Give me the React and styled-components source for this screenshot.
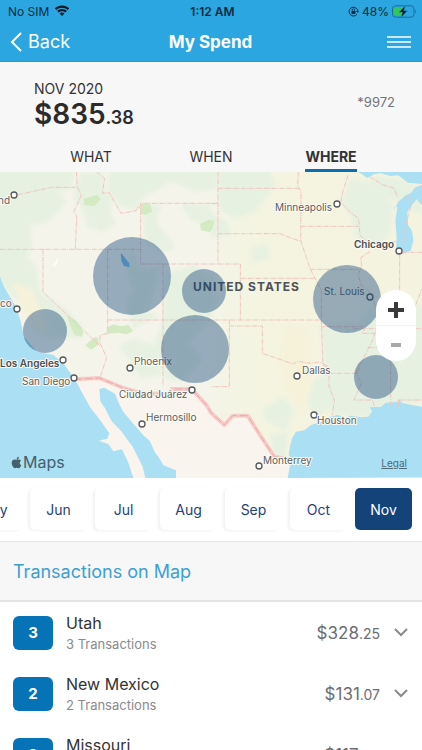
import React, { useState } from "react";
import styled, { createGlobalStyle } from "styled-components";
import { FaApple } from "react-icons/fa";

const GlobalStyle = createGlobalStyle`
  * {
    box-sizing: border-box;
  }
  body {
    margin: 0;
    font-family: Inter, "Liberation Sans", sans-serif;
    color: #333;
    background-color: white;
  }
  button {
    font: inherit;
    color: inherit;
    border: none;
    background: none;
    padding: 0;
    cursor: pointer;
  }
`;

const Screen = styled.div`
  display: flex;
  flex-direction: column;
  height: 100vh;
  overflow: hidden;
`;

const TopBar = styled.header`
  flex: none;
  background-color: #2ba6e1;
  border-bottom: 1px solid #2a98d3;
`;

const ThreeColumns = styled.div`
  display: grid;
  grid-template-columns: 1fr auto 1fr;
  align-items: center;
`;

const StatusBar = styled(ThreeColumns)`
  height: 22px;
  padding: 0 5px 0 8px;
  font-size: 12px;
  font-weight: 400;
  color: #0d2c3d;
`;

const StatusGroup = styled.div`
  display: flex;
  align-items: center;
  gap: ${({ $end }) => ($end ? "3px" : "5px")};
  justify-content: ${({ $end }) => ($end ? "flex-end" : "flex-start")};
`;

const Clock = styled.div`
  font-weight: 600;
`;

const NavBar = styled(ThreeColumns)`
  height: 39px;
  padding: 0 11px 0 10px;
  color: white;
`;

const BackButton = styled.button`
  display: flex;
  align-items: center;
  gap: 6px;
  font-size: 18px;
  line-height: 22px;
`;

const Title = styled.h1`
  margin: 0;
  font-size: 17px;
  font-weight: 700;
`;

const MenuButton = styled.button`
  justify-self: end;
  display: flex;
`;

const Summary = styled.section`
  flex: none;
  background-color: #f7f7f7;
`;

const SummaryRow = styled.div`
  display: flex;
  align-items: center;
  justify-content: space-between;
  padding: 18px 27px 10px 34px;
`;

const Period = styled.div`
  font-size: 14px;
  line-height: 18px;
`;

const Total = styled.div`
  font-size: 28px;
  line-height: 32px;
  font-weight: 600;
  color: #2b2b2b;
`;

const TotalCents = styled.span`
  font-size: 18px;
`;

const CardNumber = styled.div`
  margin-bottom: 10px;
  font-size: 13px;
  line-height: 18px;
  color: #737378;
`;

const Tabs = styled.nav`
  display: grid;
  grid-template-columns: repeat(3, 1fr);
  justify-items: center;
  padding: 0 31px;
`;

const Tab = styled.button`
  height: 28px;
  font-size: 14px;
  font-weight: ${({ $active }) => ($active ? 700 : 400)};
  border-bottom: 3px solid ${({ $active }) => ($active ? "#0b6fae" : "transparent")};
`;

const MapArea = styled.section`
  position: relative;
  flex: none;
`;

const MapDrawing = styled.svg`
  display: block;
  width: 100%;
  height: auto;
`;

const CityName = styled.text`
  font-size: 10px;
  font-weight: ${({ $major }) => ($major ? 600 : 400)};
  fill: ${({ $major }) => ($major ? "#4a4d50" : "#5c5f62")};
  stroke: #fbf9f2;
  stroke-width: ${({ $plain }) => ($plain ? "0" : "2px")};
  stroke-linejoin: round;
  paint-order: stroke;
`;

const CountryName = styled.text`
  font-size: 12px;
  font-weight: 700;
  letter-spacing: 1px;
  fill: #4d5257;
`;

const MapBrand = styled.div`
  position: absolute;
  left: 10px;
  bottom: 6px;
  display: flex;
  align-items: center;
  font-size: 16px;
  line-height: 20px;
  color: #45606d;
`;

const LegalLink = styled.a`
  position: absolute;
  right: 15px;
  bottom: 8px;
  font-size: 10px;
  line-height: 14px;
  color: #4d6a78;
`;

const ZoomControl = styled.div`
  position: absolute;
  right: 6px;
  bottom: 117px;
  width: 40px;
  border-radius: 20px;
  background-color: white;
`;

const ZoomButton = styled.button`
  display: flex;
  align-items: center;
  justify-content: center;
  width: 100%;
  height: 35px;
  padding-top: 4px;
  color: ${({ $faded }) => ($faded ? "#a9a9ab" : "#3b3b3d")};
  & + & {
    height: 36px;
    padding-top: 2px;
    border-top: 1px solid #f2f2f2;
  }
`;

const Months = styled.nav`
  flex: none;
  display: flex;
  justify-content: flex-end;
  gap: 8px;
  padding: 10px 10px 11px;
  overflow: hidden;
`;

const Month = styled.button`
  flex: none;
  width: 57px;
  height: 42px;
  border-radius: 5px;
  font-size: 14px;
  color: ${({ $active }) => ($active ? "white" : "#1f4278")};
  background-color: ${({ $active }) => ($active ? "#14437a" : "white")};
  box-shadow: ${({ $active }) => ($active ? "none" : "-2px 1px 3px rgba(0, 0, 0, 0.06)")};
`;

const ListHeading = styled.h2`
  flex: none;
  margin: 0;
  padding: 19px 13px 17px;
  border-top: 1px solid #e6e6e6;
  border-bottom: 2px solid #e4e4e4;
  background-color: #f7f7f7;
  font-size: 18px;
  line-height: 22px;
  font-weight: 400;
  color: #3ba0d3;
`;

const StateList = styled.ul`
  flex: 1;
  min-height: 0;
  margin: 0;
  padding: 0;
  list-style: none;
  overflow: hidden;
`;

const StateRow = styled.li`
  display: flex;
  align-items: center;
  height: 61px;
  padding: 0 14px 0 13px;
`;

const Count = styled.div`
  display: flex;
  align-items: center;
  justify-content: center;
  width: 40px;
  height: 34px;
  margin-right: 13px;
  border-radius: 6px;
  background-color: #0573b5;
  color: white;
  font-size: 15px;
  font-weight: 700;
`;

const StateText = styled.div`
  flex: 1;
`;

const StateName = styled.div`
  font-size: 16px;
  line-height: 22px;
`;

const StateNote = styled.div`
  font-size: 13px;
  line-height: 20px;
  color: #8a8a8e;
`;

const Amount = styled.div`
  font-size: 17px;
  color: #6d6d72;
`;

const AmountCents = styled.span`
  font-size: 14px;
`;

const ExpandButton = styled.button`
  display: flex;
  margin-left: 14px;
  color: #8a8a8e;
`;

const WifiIcon = () => (
  <svg width="16" height="12" viewBox="0 0 16 12" fill="#0a1820" aria-hidden="true">
    <path d="M8 .5C5.200.5 2.700 1.600.8 3.300l1.600 1.700C3.900 3.600 5.800 2.800 8 2.800s4.100.8 5.600 2.200l1.600-1.700C13.300 1.600 10.800.5 8 .5z" />
    <path d="M8 4c-1.900 0-3.500.7-4.800 1.900l1.600 1.700C5.700 6.800 6.800 6.300 8 6.300s2.300.5 3.200 1.300l1.600-1.700C11.500 4.700 9.900 4 8 4z" />
    <path d="M8 7.500c-1 0-1.800.4-2.400 1L8 11l2.400-2.500c-.6-.6-1.400-1-2.400-1z" />
  </svg>
);

const RotationLockIcon = () => (
  <svg width="11" height="11" viewBox="0 0 11 11" aria-hidden="true">
    <path d="M9 8.300A4.400 4.400 0 1 1 9.900 5.500" fill="none" stroke="#0d2c3d" strokeWidth="1" />
    <path d="M8.300 5h2.700L9.700 7z" fill="#0d2c3d" />
    <rect x="3.500" y="5" width="4" height="3" rx=".4" fill="#0d2c3d" />
    <path d="M4.300 5V4a1.200 1.200 0 0 1 2.400 0v1" fill="none" stroke="#0d2c3d" strokeWidth=".8" />
  </svg>
);

const BatteryIcon = () => (
  <svg width="25" height="13" viewBox="0 0 25 13" aria-hidden="true">
    <rect x=".5" y=".8" width="21.500" height="11.400" rx="3" fill="none" stroke="#1b7096" />
    <path d="M4 2.300h7.500v8.400H4a2 2 0 0 1-2-2V4.300a2 2 0 0 1 2-2z" fill="#33c659" />
    <path d="M23.300 4.700c1.200.5 1.200 3.100 0 3.600z" fill="#1b7096" />
    <path d="M13.500.5L6.800 7.200h3.700L9 12.500l6.500-6.800h-3.700z" fill="#0a1820" stroke="#2ba6e1" strokeWidth=".4" />
  </svg>
);

// Terrain, water and state lines of the south-western map tile
const Terrain = () => (
  <svg width="422" height="306" viewBox="0 0 1266 918" preserveAspectRatio="none">
    <defs>
      <linearGradient id="land" x1="0" x2="1" y1="0" y2="0">
        <stop offset="0" stopColor="#f4f4ea" />
        <stop offset=".48" stopColor="#f5f4eb" />
        <stop offset=".58" stopColor="#f3f4e1" />
        <stop offset="1" stopColor="#f3f3e0" />
      </linearGradient>
      <filter id="soft">
        <feGaussianBlur stdDeviation="7" />
      </filter>
    </defs>
    <rect width="1266" height="918" fill="url(#land)" />

    <g fill="#e7f1e1" filter="url(#soft)">
      <path d="M-20-20h245l-8 70-45 10 30 30-60 60-50 10 5 60-30 70 40 80-8 60-40-40-79-70z" />
      <path d="M240 0h70v55l28 12-8 60 20 25-40 30-50-20-10-50-30-30z" />
      <path d="M330-20h320v70l-60 10-80-30-30 20-50 25-20 40-50-10-40-55z" />
      <path d="M425 95l60 5-15 50 40 50 20 30-50 10-45-30z" />
      <path d="M540 95l93 5v70l-60-25z" />
      <path d="M395 235l25 60 60-10-20 70-20 60 40 20-80 35-20-60 20-60-20-60z" />
      <path d="M495 300l90-20 60 40 10 60-30 70-60 60 40 50-60 70-50-10-10-60-60-20-40 20-30-40 45-20 60 20 30-80z" />
      <path d="M60 250l50 30 10 80 90 60 40 50-60 10-70-60-60-60z" />
      <path d="M90 440l110-20 50 45-8 35-80-5-60-15z" />
      <path d="M370 530l40-20 70 40 5 60-60 10-30-40z" />
      <path d="M655-20h150l20 60-60 80-60 20-50-30z" />
      <path d="M633 120l50 30 10 40-60 10z" />
      <path d="M750 230l50-15 10 40-50 20z" />
      <path d="M1050 20l60 10 70 70-10 80-40 50-60-30-15-60-30-50z" />
      <path d="M1110 10l80 10 76 30v80l-70-40-70-30z" />
      <path d="M1220 400h60v290l-134 12-36 34-110-8-30-60 10-70-20-134 120-6 30-50z" />
      <path d="M790 710l60-35 35 40-30 60-60-30z" />
      <path d="M810 790l55-10-8 80-30 5z" />
      <path d="M930 620l55-10 10 90-50 40-30-60z" />
    </g>
    <g fill="#d3eac3">
      <path d="M252 80l40-12 10 15-20 20-30-5z" />
      <path d="M600 155l28-12 16 4-8 26-8 7-25-5z" />
      <path d="M255 520l30-25 10 4 2 18-24 16z" />
      <path d="M200 430l30 18 20 32-4 14-20-4-12-20z" />
      <path d="M325 465l15-8 20 6 25-4 15 18-20 10-25-5-35 4z" />
      <path d="M423 95l28 2 6 22-22 10-12-4z" />
    </g>
    <g fill="#f6f2da" filter="url(#soft)">
      <path d="M35 330l60 20 50 120-20 20-50-60z" />
      <path d="M860 450l60 30 10 80 15 50-40 130-50-100-20-80z" />
    </g>

    {/* Mexico */}
    <path
      d="M222 622l76-4 72 30 60 17h80l5-14h60l45 49 13 22 40 37 25-28h45l40 63 40 60 45 8v56H222z"
      fill="#f9f4ee"
    />

    <g fill="#abdff3">
      <path d="M0 314l10 26 8 15 27 45 15 40 12 54 38 45 50 10 30 25 35 48 20 38 25 45 30 39 28 40-6 16-26 6 29 10 15 22 26-6 19 40 15 46H0z" />
      <path d="M298 651l15-4 32 18 12 30 13 25 30 35 30 35 20 18 14 32 16 22 10 18 38 15v23h-92l-8-34-17-34-12-24-35-48-30-32-18-36-15-22z" />
      <path d="M863 918l10-54-7-18 4-22 6-25 12-20 25-4 20-16 32-10 20-13 28-7 22 8 18-6 30 5 22-2 12-16-8-12 34-2 14-12 36-2 2-10 10 12 25 6 36 6v212z" />
      <path d="M1184 104l-2 12 6-14 6-12 24-20 16-8 12-16 20-8v14l-8 22-22 24-14 22 2 40 12 16 4 30-8 30-24 10-20-10 2-40-4-50 6-42z" />
      <path d="M1075 0l13 8 14 10 20-12 20-2 30 8 22-2 30 22 42 4V0z" />
      <path d="M1246 66l20-14v48l-12-14z" />
    </g>
    <path d="M362 244l4 2 12 16 10 12v12l-16-4-8-16z" fill="#7cbaea" />
    <path d="M160 280l16-24-5 18-12 12z" fill="#fff" />

    <path
      d="M222 622l76-4 72 30 60 17h80l5-14h60l45 49 13 22 40 37 25-28h45l40 63 40 60 45 8"
      fill="none"
      stroke="#f7cbc8"
      strokeWidth="12"
      strokeLinejoin="round"
    />
    <path
      d="M222 622l76-4 72 30 60 17h80l5-14h60l45 49 13 22 40 37 25-28h45l40 63 40 60 45 8"
      fill="none"
      stroke="#e9a9a6"
      strokeWidth="3"
      strokeDasharray="24 8"
    />

    <g fill="none" stroke="#f0c4bd" strokeWidth="3" strokeDasharray="14 3 3 3">
      <path d="M55 68l100-22h77M229 0l3 46 12 24-23 50 9 12-4 100M0 232h422M290 0l24 20-7 44 21-2 35 62 45-8 7-14 7 10" />
      <path d="M654 94H422v182h299M323 232v252l-23 6v24l20 42-20 62M129 232v128l121 114 50 48M489 276v369M323 444h640M721 276v168" />
      <path d="M654 0v276M654 49h244M654 185h186l60 23M895 0l-2 40 10 20-1 145 28 85 34 65v109M903 163h173M930 292h145M721 319h222M633 95h21" />
      <path d="M1044 10l-16 50-6 30 30 32 24 18 4 50 25 22M1110 239l-28 18 3 22-10 30 8 30 30 24 20 60 35 20M1105 209h98M1199 246v170l-30 28M1206 241h60" />
      <path d="M1108 14l40 24 34 10 12 30M1215 72l22 15-22 80v45" />
      <path d="M688 444v200h-55M688 462h99v82l93 32 12-8 40 6 25-4 28 12M963 464h135l-12 20h60M965 464l4 116 18 6v56l16 42-6 46M987 604h85l10-30 36-70 20-60M1105 527h60M1078 570l-10 34 16 30-22 50h55l10 30M1172 480v220M1195 704v-20h71M1060 470h206M1239 420l27-70" />
    </g>
  </svg>
);

const cities = [
  { name: "nd", x: -2, y: 32, pinX: 14, pinY: 23 },
  { name: "co", x: 0, y: 135, pinX: 17, pinY: 137 },
  { name: "Minneapolis", x: 275, y: 39, pinX: 337, pinY: 32 },
  { name: "Chicago", x: 354, y: 76, pinX: 399, pinY: 79, major: true },
  { name: "St. Louis", x: 324, y: 123, pinX: 370, pinY: 125, plain: true },
  { name: "Los Angeles", x: 0, y: 195, pinX: 63, pinY: 188, major: true },
  { name: "San Diego", x: 22, y: 213, pinX: 74, pinY: 206 },
  { name: "Phoenix", x: 134, y: 193, pinX: 130, pinY: 196 },
  { name: "Ciudad Juárez", x: 119, y: 226, pinX: 192, pinY: 218 },
  { name: "Hermosillo", x: 146, y: 249, pinX: 142, pinY: 252 },
  { name: "Dallas", x: 302, y: 202, pinX: 297, pinY: 204 },
  { name: "Houston", x: 317, y: 252, pinX: 314, pinY: 243 },
  { name: "Monterrey", x: 263, y: 292, pinX: 259, pinY: 294 },
];

const spendBubbles = [
  { x: 132, y: 104, r: 39 },
  { x: 204, y: 119, r: 22 },
  { x: 195, y: 177, r: 34 },
  { x: 45, y: 159, r: 22 },
  { x: 347, y: 127, r: 34 },
  { x: 376, y: 205, r: 22 },
];

const tabs = ["WHAT", "WHEN", "WHERE"];
const months = ["May", "Jun", "Jul", "Aug", "Sep", "Oct", "Nov"];

const states = [
  { name: "Utah", count: 3, dollars: "$328", cents: ".25" },
  { name: "New Mexico", count: 2, dollars: "$131", cents: ".07" },
  { name: "Missouri", count: 2, dollars: "$117", cents: ".20" },
];

const SpendMap = () => (
  <MapArea>
    <MapDrawing viewBox="0 0 422 306" role="img" aria-label="Spend by location">
      <Terrain />
      <CountryName x="193" y="119">UNITED STATES</CountryName>
      {cities.map(({ name, x, y, pinX, pinY, major, plain }) => (
        <g key={name}>
          <circle cx={pinX} cy={pinY} r="3" fill={plain ? "none" : "white"} stroke="#56595c" strokeWidth="1.300" />
          <CityName x={x} y={y} $major={major} $plain={plain}>{name}</CityName>
        </g>
      ))}
      {spendBubbles.map(({ x, y, r }) => (
        <circle key={`${x}-${y}`} cx={x} cy={y} r={r} fill="#14457a" fillOpacity=".42" />
      ))}
    </MapDrawing>
    <MapBrand>
      <FaApple size={13} />
      Maps
    </MapBrand>
    <LegalLink href="#legal">Legal</LegalLink>
    <ZoomControl>
      <ZoomButton aria-label="Zoom in">
        <svg width="16" height="16" viewBox="0 0 16 16" stroke="currentColor" strokeWidth="4">
          <path d="M8 0v16M0 8h16" />
        </svg>
      </ZoomButton>
      <ZoomButton aria-label="Zoom out" $faded>
        <svg width="10" height="4" viewBox="0 0 10 4">
          <rect width="10" height="4" fill="currentColor" />
        </svg>
      </ZoomButton>
    </ZoomControl>
  </MapArea>
);

const App = () => {
  const [activeTab, setActiveTab] = useState("WHERE");
  const [activeMonth, setActiveMonth] = useState("Nov");

  return (
    <Screen>
      <GlobalStyle />
      <TopBar>
        <StatusBar>
          <StatusGroup>
            No SIM
            <WifiIcon />
          </StatusGroup>
          <Clock>1:12 AM</Clock>
          <StatusGroup $end>
            <RotationLockIcon />
            48%
            <BatteryIcon />
          </StatusGroup>
        </StatusBar>
        <NavBar>
          <BackButton>
            <svg width="12" height="20" viewBox="0 0 12 20" fill="none" stroke="currentColor" strokeWidth="2">
              <path d="M11 1L2 10l9 9" />
            </svg>
            Back
          </BackButton>
          <Title>My Spend</Title>
          <MenuButton aria-label="Menu">
            <svg width="24" height="14" viewBox="0 0 24 14" stroke="currentColor" strokeWidth="1.500">
              <path d="M0 2h24M0 7h24M0 12h24" />
            </svg>
          </MenuButton>
        </NavBar>
      </TopBar>

      <Summary>
        <SummaryRow>
          <div>
            <Period>NOV 2020</Period>
            <Total>
              $835<TotalCents>.38</TotalCents>
            </Total>
          </div>
          <CardNumber>*9972</CardNumber>
        </SummaryRow>
        <Tabs>
          {tabs.map((tab) => (
            <Tab key={tab} $active={tab === activeTab} onClick={() => setActiveTab(tab)}>
              {tab}
            </Tab>
          ))}
        </Tabs>
      </Summary>

      <SpendMap />

      <Months>
        {months.map((month) => (
          <Month key={month} $active={month === activeMonth} onClick={() => setActiveMonth(month)}>
            {month}
          </Month>
        ))}
      </Months>

      <ListHeading>Transactions on Map</ListHeading>
      <StateList>
        {states.map(({ name, count, dollars, cents }) => (
          <StateRow key={name}>
            <Count>{count}</Count>
            <StateText>
              <StateName>{name}</StateName>
              <StateNote>{count} Transactions</StateNote>
            </StateText>
            <Amount>
              {dollars}
              <AmountCents>{cents}</AmountCents>
            </Amount>
            <ExpandButton aria-label={`Show ${name} transactions`}>
              <svg width="14" height="9" viewBox="0 0 14 9" fill="none" stroke="currentColor" strokeWidth="2">
                <path d="M1 1l6 6 6-6" />
              </svg>
            </ExpandButton>
          </StateRow>
        ))}
      </StateList>
    </Screen>
  );
};

export default App;
